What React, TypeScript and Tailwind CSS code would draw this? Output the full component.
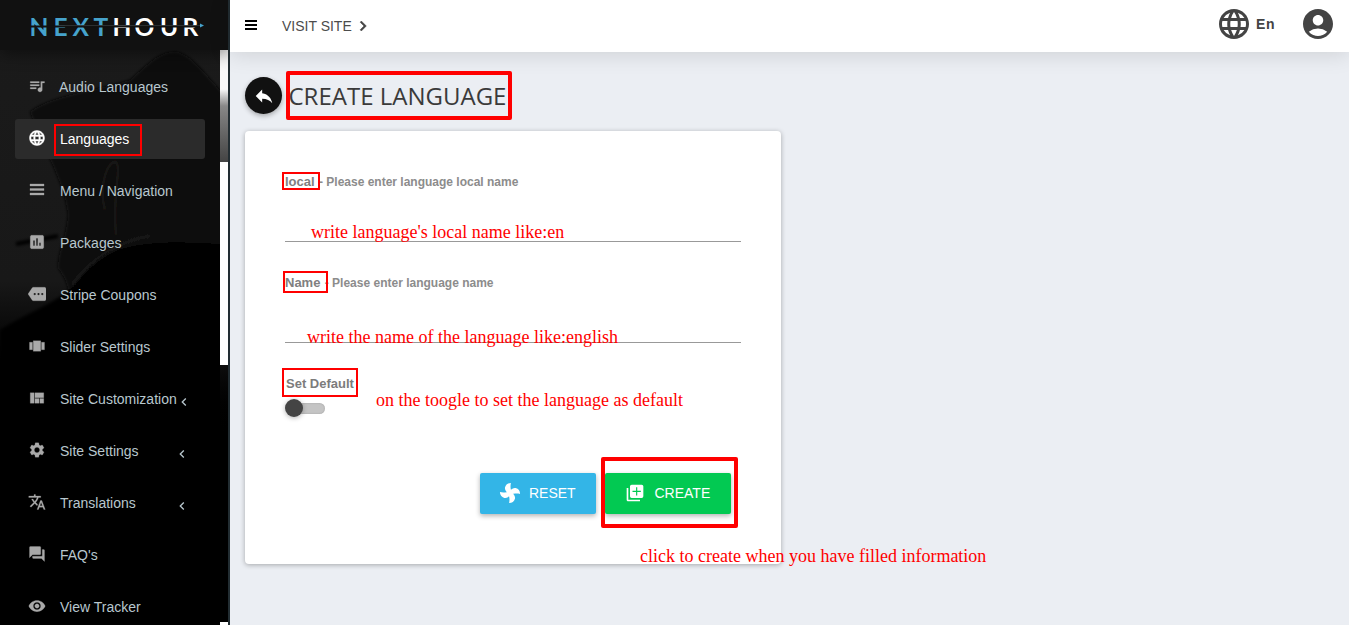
import React from 'react';
import {
  MdQueueMusic, MdLanguage, MdInsertChart, MdMore, MdViewCarousel, MdViewQuilt,
  MdSettings, MdTranslate, MdQuestionAnswer, MdVisibility, MdReply,
  MdAccountCircle, MdChevronRight, MdChevronLeft,
} from 'react-icons/md';

type IconProps = { className?: string };

function BarsIcon({ className }: IconProps) {
  return (
    <svg className={className} viewBox="0 0 18 18" fill="currentColor">
      <path d="M2 3h14v2H2zM2 7.500h14v2H2zM2 12h14v2H2z" />
    </svg>
  );
}

function PinwheelIcon({ className }: IconProps) {
  const blade = 'M12 13.200C8.500 11.800 5.800 9 6.600 5.800C7.300 2.800 9.800 1 13 1C12.200 4.500 12.400 8 14.200 11.500z';
  return (
    <svg className={className} viewBox="0 0 24 24" fill="currentColor">
      <path d={blade} />
      <path d={blade} transform="rotate(90 12 12)" />
      <path d={blade} transform="rotate(180 12 12)" />
      <path d={blade} transform="rotate(270 12 12)" />
    </svg>
  );
}

function AddStackIcon({ className }: IconProps) {
  return (
    <svg className={className} viewBox="0 0 24 24" fill="currentColor">
      <path
        fillRule="evenodd"
        d="M4 6H2v14c0 1.100.9 2 2 2h14v-2H4V6zM8 2h12a2 2 0 0 1 2 2v12a2 2 0 0 1-2 2H8a2 2 0 0 1-2-2V4a2 2 0 0 1 2-2zM13.300 5h1.400v4.300h4.300v1.400h-4.300V15h-1.400v-4.300H9V9.300h4.300z"
      />
    </svg>
  );
}

type Item = {
  label: string;
  icon: React.ComponentType<IconProps>;
  active?: boolean;
  nested?: boolean;
};

const items: Item[] = [
  { label: 'Audio Languages', icon: MdQueueMusic },
  { label: 'Languages', icon: MdLanguage, active: true },
  { label: 'Menu / Navigation', icon: BarsIcon },
  { label: 'Packages', icon: MdInsertChart },
  { label: 'Stripe Coupons', icon: MdMore },
  { label: 'Slider Settings', icon: MdViewCarousel },
  { label: 'Site Customization', icon: MdViewQuilt, nested: true },
  { label: 'Site Settings', icon: MdSettings, nested: true },
  { label: 'Translations', icon: MdTranslate, nested: true },
  { label: "FAQ's", icon: MdQuestionAnswer },
  { label: 'View Tracker', icon: MdVisibility },
];

function Logo() {
  return (
    <svg width="180" height="42" viewBox="0 0 180 42" className="block" fontFamily="Lato, sans-serif" fontWeight="700" fontSize="24.500">
      <text x="-0.500 23.500 42.500 63.500" y="31" fill="#46a3cc">NEXT</text>
      <text x="82.500 104.500 130 152.500" y="31" fill="#ffffff">HOUR</text>
      <path d="M0 21.500H171" stroke="#111" strokeWidth="2" />
      <path d="M30 20.500H171" stroke="#33383b" strokeWidth="0.800" />
      <path d="M170 18.500l4 2-4 2z" fill="#46a3cc" />
    </svg>
  );
}

function Backdrop() {
  return (
    <svg className="absolute left-0 top-0" width="228" height="625" viewBox="0 0 228 625">
      <defs>
        <linearGradient id="fade" x1="0" y1="0" x2="0" y2="1">
          <stop offset="0" stopColor="#1b1b1b" />
          <stop offset="0.45" stopColor="#181818" />
          <stop offset="0.58" stopColor="#000" />
        </linearGradient>
        <filter id="soft"><feGaussianBlur stdDeviation="1.5" /></filter>
      </defs>
      <rect width="228" height="625" fill="url(#fade)" />
      <g filter="url(#soft)">
        <path d="M30 112C50 96 90 92 130 80C150 62 162 50 178 52C200 60 210 85 232 100V330H60C70 310 75 290 58 268C58 250 66 240 68 215C66 190 50 160 42 140Z" fill="#0b0b0b" />
        <path d="M0 330C40 305 70 300 90 265C120 240 170 240 232 245V640H0Z" fill="#020202" />
        <path d="M105 210C98 185 108 160 116 162C122 170 112 190 116 235" fill="none" stroke="#171412" strokeWidth="3" />
        <path d="M72 285C90 260 120 240 150 236" fill="none" stroke="#1b1b1b" strokeWidth="2" />
        <path d="M16 244L58 236" stroke="#050505" strokeWidth="4" />
      </g>
    </svg>
  );
}

function Sidebar() {
  return (
    <aside className="relative h-[625px] w-[230px] shrink-0 overflow-hidden border-r-2 border-[#222d32] bg-black">
      <Backdrop />
      <div className="absolute top-[50px] right-0 h-[575px] w-2">
        <div className="h-[112px] bg-linear-to-b from-[#f8f8f8] from-35% via-[#888] via-50% to-[#444]" />
        <div className="h-[203px] bg-white" />
        <div className="h-[257px] bg-linear-to-b from-[#0e0e0e] to-black to-30%" />
        <div className="h-[3px] bg-white" />
      </div>
      <div className="relative flex h-[50px] items-start bg-[#111] pt-[5px] pl-[30px] shadow-[0_4px_16px_rgba(0,0,0,0.45)]">
        <Logo />
      </div>
      <nav className="relative flex w-[220px] flex-col gap-3 px-[15px] pt-[17px]">
        {items.map(({ label, icon: Icon, active, nested }) => (
          <a
            key={label}
            className={
              active
                ? 'flex h-10 shrink-0 items-center rounded-[3px] bg-[#2b2b2b] pl-[13px] text-sm text-white'
                : 'flex h-10 shrink-0 items-center rounded-[3px] pl-[13px] text-sm text-[#b8c7ce]'
            }
          >
            <Icon
              className={
                active
                  ? 'mb-0.5 size-[18px] shrink-0 text-white [&>path:last-child]:stroke-white [&>path:last-child]:stroke-[0.6px]'
                  : 'mb-0.5 size-[18px] shrink-0 text-[#a9a9a9] [&>path:last-child]:stroke-[#a9a9a9] [&>path:last-child]:stroke-[0.3px]'
              }
            />
            <span className={label === 'Audio Languages' ? 'ml-[13px] whitespace-nowrap' : 'ml-[14px] whitespace-nowrap'}>{label}</span>
            {nested && <MdChevronLeft className="mt-[6px] mr-[14px] -ml-1 size-4 shrink-0 text-[#b8c7ce] first:ml-0 [span+&]:ml-auto [span+&]:-translate-x-px" />}
          </a>
        ))}
      </nav>
    </aside>
  );
}

function Header() {
  return (
    <header className="relative flex h-[52px] items-center bg-white pr-[13px] pl-[15px] text-[#444] shadow-[0_2px_22px_rgba(0,0,0,0.13)]">
      <svg className="mb-0.5 h-3 w-3" viewBox="0 0 12 12" fill="#000" shapeRendering="crispEdges">
        <path d="M0 1h12v2H0zM0 5h12v2H0zM0 9h12v2H0z" />
      </svg>
      <span className="ml-[25px] text-sm text-[#4c4c4c]">VISIT SITE</span>
      <MdChevronRight className="ml-px size-5 [&>path:last-child]:stroke-[#444] [&>path:last-child]:stroke-[0.6px]" />
      <div className="mb-1 ml-auto flex items-center">
        <MdLanguage className="size-9" />
        <span className="ml-1 text-sm font-bold tracking-[0.5px]">En</span>
        <MdAccountCircle className="ml-[25px] size-9" />
      </div>
    </header>
  );
}

function Field({ name, hint }: { name: string; hint: string }) {
  return (
    <div className="flex h-[101px] flex-col">
      <label className="flex h-5 items-center text-xs font-bold text-[#8c8c8c]">
        <span className="mr-px text-[13px] text-[#808080]">{name}</span>
        <span className="whitespace-pre"> - {hint}</span>
      </label>
      <div className="mt-[11px] h-[39px] border-b border-[#999]" />
    </div>
  );
}

function Card() {
  return (
    <section className="mt-[17px] h-[433px] w-[536px] rounded bg-white px-10 pt-[41px] shadow-[0_1px_5px_rgba(0,0,0,0.3)]">
      <Field name="local" hint="Please enter language local name" />
      <Field name="Name" hint="Please enter language name" />
      <div className="flex h-5 items-center pl-px text-[13px] font-bold text-[#7c7c7c]">Set Default</div>
      <div className="mt-[5px] flex h-[18px] items-center">
        <i className="z-10 size-[18px] rounded-full bg-[#444] shadow-[0_1px_5px_rgba(0,0,0,0.3)]" />
        <i className="-ml-2 h-[11px] w-[30px] rounded-r-full bg-[#c4c4c4] shadow-[inset_0_0_2px_rgba(0,0,0,0.2)]" />
      </div>
      <div className="mt-14 flex justify-end gap-[9px] pr-[10px] text-sm text-white">
        <button className="flex h-[41px] w-[116px] items-center rounded-[2px] bg-[#33b5e7] pb-0.5 pl-[19px] shadow-[0_2px_5px_rgba(0,0,0,0.3)]">
          <PinwheelIcon className="size-[22px]" />
          <span className="ml-2">RESET</span>
        </button>
        <button className="flex h-[41px] w-[126px] items-center rounded-[2px] bg-[#02c952] pb-0.5 pl-5 shadow-[0_2px_5px_rgba(0,0,0,0.3)]">
          <AddStackIcon className="size-5" />
          <span className="ml-[9.5px]">CREATE</span>
        </button>
      </div>
    </section>
  );
}

function Annotations() {
  return (
    <div className="pointer-events-none absolute inset-0 z-20 font-['Liberation_Serif',serif] text-lg leading-[22px] whitespace-nowrap text-[#f00]">
      <i className="absolute top-[124px] left-[54px] h-8 w-[88px] border-2 border-[#f00]" />
      <i className="absolute top-[71px] left-[286px] h-[49px] w-[226px] rounded-[2px] border-4 border-[#f00]" />
      <i className="absolute top-[172px] left-[282px] h-[18px] w-[38px] border-2 border-[#f00]" />
      <i className="absolute top-[271px] left-[283px] h-[22px] w-[45px] border-2 border-[#f00]" />
      <i className="absolute top-[368px] left-[282px] h-[29px] w-[76px] border-2 border-[#f00]" />
      <i className="absolute top-[457px] left-[601px] h-[71px] w-[137px] rounded-[2px] border-4 border-[#f00]" />
      <span className="absolute top-[221px] left-[311px]">write language's local name like:en</span>
      <span className="absolute top-[326px] left-[307px]">write the name of the language like:english</span>
      <span className="absolute top-[389px] left-[376px]">on the toogle to set the language as default</span>
      <span className="absolute top-[545px] left-[640px]">click to create when you have filled information</span>
    </div>
  );
}

export default function App() {
  return (
    <div className="relative flex h-[625px] w-[1349px] overflow-hidden bg-[#ebeef3] font-['Liberation_Sans',Arial,sans-serif]">
      <Sidebar />
      <div className="flex min-w-0 flex-1 flex-col">
        <Header />
        <main className="flex flex-col pt-[25px] pl-[15px]">
          <div className="flex h-[37px] items-center">
            <span className="flex size-[37px] items-center justify-center rounded-full bg-[#111] text-white shadow-[0_2px_5px_rgba(0,0,0,0.3)]">
              <MdReply className="size-[22px]" />
            </span>
            <h1 className="ml-[6.5px] font-['Open_Sans',sans-serif] text-2xl font-normal text-[#3a3a3a]">CREATE LANGUAGE</h1>
          </div>
          <Card />
        </main>
      </div>
      <Annotations />
    </div>
  );
}
